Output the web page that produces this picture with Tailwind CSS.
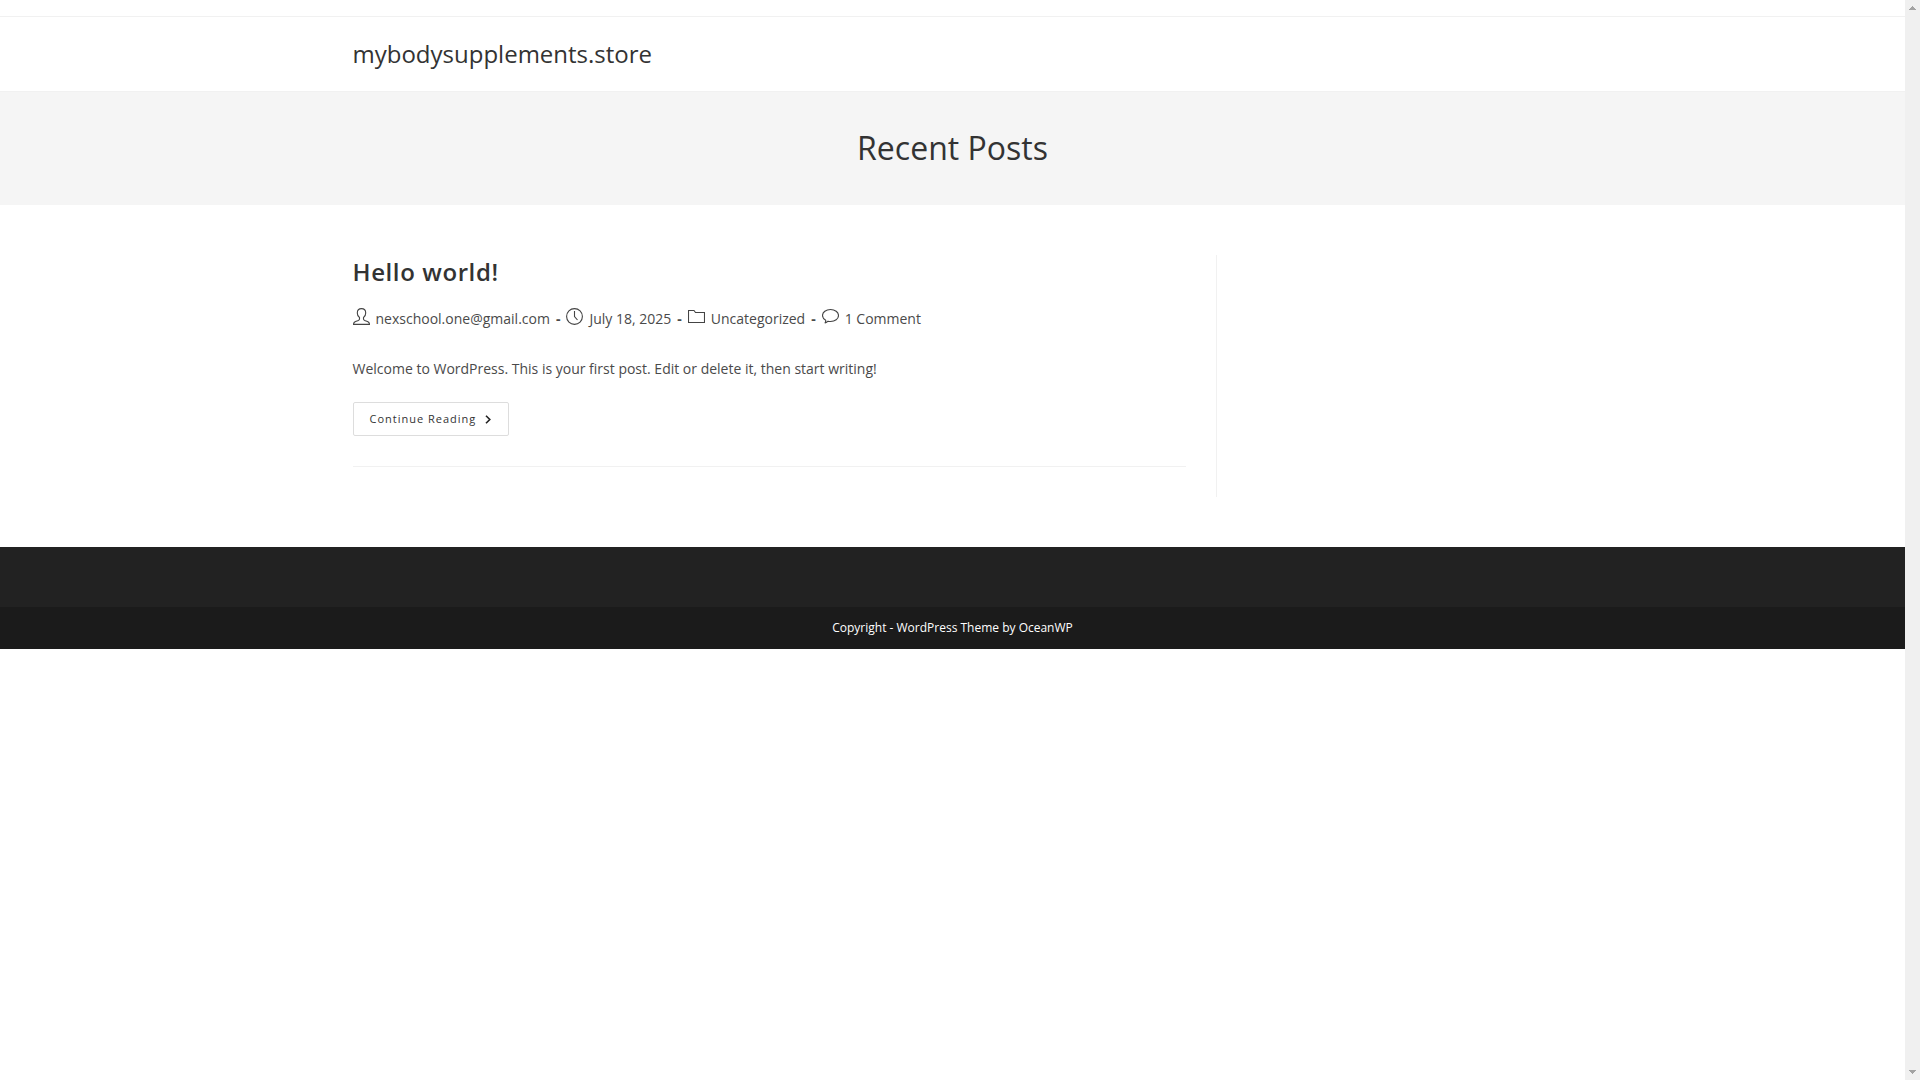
<!DOCTYPE html>
<html lang="en">
<head>
    <meta charset="UTF-8">
    <meta name="viewport" content="width=device-width, initial-scale=1.0">
    <title>mybodysupplements.store</title>
    <script src="https://cdn.jsdelivr.net/npm/@tailwindcss/browser@4"></script>
</head>
<body class="flex min-h-screen bg-white font-['Open_Sans',sans-serif] text-sm text-[#4a4a4a]">
    <div class="min-w-0 flex-1">
        <!-- Top bar -->
        <div class="h-[17px] border-b border-[#f1f1f1]"></div>

        <!-- Header -->
        <header class="border-b border-[#f1f1f1]">
            <div class="mx-auto flex h-[74px] max-w-[1200px] items-center">
                <a href="#" class="text-2xl text-[#333]">mybodysupplements.store</a>
            </div>
        </header>

        <!-- Page title -->
        <div class="bg-[#f5f5f5] pt-[34px] pb-9 text-center">
            <h1 class="text-[32px] leading-[43px] text-[#333]">Recent Posts</h1>
        </div>

        <!-- Content -->
        <div class="mx-auto flex max-w-[1200px] py-[50px]">
            <main class="w-[72%] border-r border-[#f1f1f1] pr-[30px] pb-[30px]">
                <article class="border-b border-[#f1f1f1] pb-[30px]">
                    <h2 class="text-2xl leading-[34px] font-semibold tracking-wide text-[#333]"><a href="#">Hello world!</a></h2>

                    <ul class="mt-[18px] flex flex-wrap leading-6">
                        <li class="flex">
                            <svg class="mt-px mr-[6px] size-[17px]" viewBox="0 0 17 17" fill="none" stroke="#444" stroke-width="1.1" stroke-linejoin="round">
                                <path d="M6.5 9.5C5.1 8.6 4.3 7 4.3 4.9 4.3 2.2 5.9.6 8.5.6s4.200 1.600 4.200 4.300c0 2.100-.8 3.700-2.200 4.600v1.600c0 .7.4 1 1.100 1.300l2.900 1.100c1.200.5 2 1.300 2 2.900H.5c0-1.600.8-2.400 2-2.900l2.900-1.100c.7-.3 1.100-.6 1.100-1.300z"/>
                            </svg>
                            <a href="#">nexschool.one@gmail.com</a>
                            <span class="mx-[6px] font-bold">-</span>
                        </li>
                        <li class="flex">
                            <svg class="mt-px mr-[6px] size-[17px]" viewBox="0 0 17 17" fill="none" stroke="#444" stroke-width="1.1">
                                <circle cx="8.5" cy="8.5" r="7.900"/>
                                <path d="M8.500 3v5.500l3 3.500"/>
                            </svg>
                            July 18, 2025
                            <span class="mx-[6px] font-bold">-</span>
                        </li>
                        <li class="flex">
                            <svg class="mt-px mr-[6px] size-[17px]" viewBox="0 0 17 17" fill="none" stroke="#444" stroke-width="1.1">
                                <path d="M.5 14.500v-12h5.500l1.500 2h9v10z"/>
                            </svg>
                            <a href="#">Uncategorized</a>
                            <span class="mx-[6px] font-bold">-</span>
                        </li>
                        <li class="flex">
                            <svg class="mt-px mr-[6px] size-[17px]" viewBox="0 0 17 17" fill="none" stroke="#444" stroke-width="1.1" stroke-linejoin="round">
                                <path d="M8.500 1.500c4.500 0 8 2.600 8 6s-3.500 6-8 6c-.9 0-1.700-.1-2.500-.3-.8.900-1.700 1.500-2.900 1.700.5-.8.7-1.700.6-2.700C1.700 11.100.5 9.400.5 7.500c0-3.400 3.500-6 8-6z"/>
                            </svg>
                            <a href="#">1 Comment</a>
                        </li>
                    </ul>

                    <p class="mt-[25px] leading-[25px]">Welcome to WordPress. This is your first post. Edit or delete it, then start writing!</p>

                    <a href="#" class="mt-[21px] inline-flex h-[34px] items-center rounded-[2px] border border-[#ddd] px-4 text-[11px] tracking-[1px] text-[#333]">
                        Continue Reading
                        <svg class="ml-2 h-[9px] w-2" viewBox="0 0 8 9" fill="none" stroke="#222" stroke-width="1.600">
                            <path d="M2 .7l3.800 3.800L2 8.300"/>
                        </svg>
                    </a>
                </article>
            </main>
            <aside class="flex-1"></aside>
        </div>

        <!-- Footer -->
        <footer>
            <div class="h-[60px] bg-[#222]"></div>
            <div class="bg-[#1b1b1b] py-3 text-center text-xs leading-[18px] text-white">Copyright - WordPress Theme by OceanWP</div>
        </footer>
    </div>

    <!-- Scroll track -->
    <div class="flex w-[15px] flex-col items-center justify-between bg-[#f0f0f0] py-[6px]" aria-hidden="true">
        <svg class="h-1 w-[7px]" viewBox="0 0 7 4" fill="#a3a3a3" shape-rendering="crispEdges">
            <path d="M3 0h1v1h1v1h1v1h1v1H0V3h1V2h1V1h1z"/>
        </svg>
        <svg class="h-1 w-[7px]" viewBox="0 0 7 4" fill="#a3a3a3" shape-rendering="crispEdges">
            <path d="M0 0h7v1H6v1H5v1H4v1H3V3H2V2H1V1H0z"/>
        </svg>
    </div>
</body>
</html>
